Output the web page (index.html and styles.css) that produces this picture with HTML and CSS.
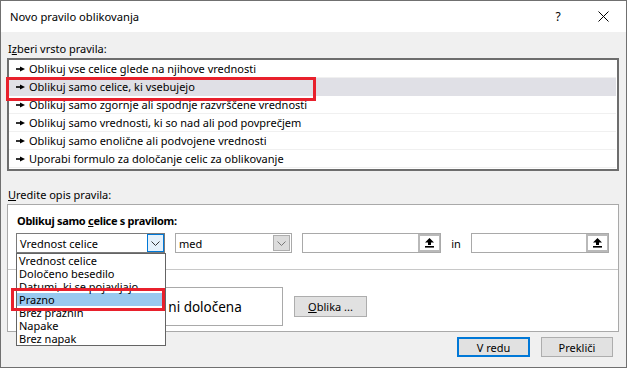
FILE: index.html
```html
<!DOCTYPE html>
<html lang="sl">
<head>
<meta charset="utf-8">
<title>Novo pravilo oblikovanja</title>
<link rel="stylesheet" href="styles.css">
</head>
<body>
<div class="window">
  <div class="titlebar">
    <span class="title">Novo pravilo oblikovanja</span>
    <span class="help">?</span>
    <svg class="close" width="11" height="11" viewBox="0 0 11 11"><path d="M0.5 0.5 L10.5 10.5 M10.5 0.5 L0.5 10.5" stroke="#000" stroke-width="1" fill="none"/></svg>
  </div>
  <div class="content">
    <div class="label">I<u>z</u>beri vrsto pravila:</div>
    <div class="listbox">
      <div class="row"><svg class="arrow" width="9" height="6" viewBox="0 0 9 6"><rect x="0" y="2.2" width="5" height="1.6" fill="#000"/><polygon points="4,0.5 9,3 4,5.5" fill="#000"/></svg>Oblikuj vse celice glede na njihove vrednosti</div>
      <div class="row selected"><svg class="arrow" width="9" height="6" viewBox="0 0 9 6"><rect x="0" y="2.2" width="5" height="1.6" fill="#000"/><polygon points="4,0.5 9,3 4,5.5" fill="#000"/></svg>Oblikuj samo celice, ki vsebujejo</div>
      <div class="row"><svg class="arrow" width="9" height="6" viewBox="0 0 9 6"><rect x="0" y="2.2" width="5" height="1.6" fill="#000"/><polygon points="4,0.5 9,3 4,5.5" fill="#000"/></svg>Oblikuj samo zgornje ali spodnje razvrščene vrednosti</div>
      <div class="row"><svg class="arrow" width="9" height="6" viewBox="0 0 9 6"><rect x="0" y="2.2" width="5" height="1.6" fill="#000"/><polygon points="4,0.5 9,3 4,5.5" fill="#000"/></svg>Oblikuj samo vrednosti, ki so nad ali pod povprečjem</div>
      <div class="row"><svg class="arrow" width="9" height="6" viewBox="0 0 9 6"><rect x="0" y="2.2" width="5" height="1.6" fill="#000"/><polygon points="4,0.5 9,3 4,5.5" fill="#000"/></svg>Oblikuj samo enolične ali podvojene vrednosti</div>
      <div class="row"><svg class="arrow" width="9" height="6" viewBox="0 0 9 6"><rect x="0" y="2.2" width="5" height="1.6" fill="#000"/><polygon points="4,0.5 9,3 4,5.5" fill="#000"/></svg>Uporabi formulo za določanje celic za oblikovanje</div>
    </div>
    <div class="label label2"><u>U</u>redite opis pravila:</div>
    <div class="desc">
      <div class="desc-title">Oblikuj samo <u>c</u>elice s pravilom:</div>
      <div class="controls">
        <div class="combo combo1"><span class="combo-text">Vrednost celice</span><span class="drop drop-active"><svg width="9" height="5" viewBox="0 0 9 5"><path d="M0.5 0.5 L4.5 4.5 L8.5 0.5" stroke="#333" fill="none"/></svg></span></div>
        <div class="combo combo2"><span class="combo-text">med</span><span class="drop"><svg width="9" height="5" viewBox="0 0 9 5"><path d="M0.5 0.5 L4.5 4.5 L8.5 0.5" stroke="#777" fill="none"/></svg></span></div>
        <div class="ref ref1"><span class="ref-field"></span><span class="ref-btn"><svg width="9" height="10" viewBox="0 0 9 10"><polygon points="4.5,0 9,4.5 6,4.5 6,7 3,7 3,4.5 0,4.5" fill="#000"/><rect x="0" y="8" width="9" height="1.6" fill="#000"/></svg></span></div>
        <span class="and">in</span>
        <div class="ref ref2"><span class="ref-field"></span><span class="ref-btn"><svg width="9" height="10" viewBox="0 0 9 10"><polygon points="4.5,0 9,4.5 6,4.5 6,7 3,7 3,4.5 0,4.5" fill="#000"/><rect x="0" y="8" width="9" height="1.6" fill="#000"/></svg></span></div>
      </div>
      <div class="sep"></div>
      <div class="preview-row">
        <span class="preview-spacer"></span>
        <div class="preview">Oblika ni določena</div>
        <button class="btn btn-format"><u>O</u>blika ...</button>
      </div>
    </div>
    <div class="buttons">
      <button class="btn btn-ok">V redu</button>
      <button class="btn btn-cancel">Prekliči</button>
    </div>
  </div>

  <ul class="dropdown">
    <li>Vrednost celice</li>
    <li>Določeno besedilo</li>
    <li>Datumi, ki se pojavljajo</li>
    <li class="hl">Prazno</li>
    <li>Brez praznih</li>
    <li>Napake</li>
    <li>Brez napak</li>
  </ul>
  <div class="mark mark1"></div>
  <div class="mark mark2"></div>
</div>
</body>
</html>
```
FILE: styles.css
```css
* { box-sizing: border-box; }
html, body { margin: 0; padding: 0; }
body {
  font-family: "Noto Sans", "Open Sans", sans-serif;
  font-size: 11px;
  color: #000;
  background: #fff;
}
.window {
  position: relative;
  width: 627px;
  height: 368px;
  border: 1px solid #707070;
  background: #f0f0f0;
  display: flex;
  flex-direction: column;
}
.titlebar {
  height: 31px;
  background: #fff;
  display: flex;
  align-items: center;
  padding-left: 9px;
}
.title { font-size: 11.2px; }
.help { margin-left: auto; width: 12px; text-align: center; font-size: 12px; }
.close { margin-left: 34px; margin-right: 17px; }
.content {
  padding: 9px 7px 0 6px;
  display: flex;
  flex-direction: column;
}
.label { line-height: 15px; height: 15px; padding-left: 1px; margin-bottom: 2px; }
.listbox {
  border: 2px solid #6d6d6d;
  background: #fff;
  padding: 0 1px 1px 0;
}
.row {
  height: 18px;
  border-bottom: 1px solid #f0f0f0;
  display: flex;
  align-items: center;
  padding-left: 7px;
  white-space: nowrap;
}
.row.selected { background: #e0e0e6; border-bottom-color: #e0e0e6; }
.arrow { margin-right: 4px; flex: none; }
.label2 { margin-top: 16px; }
.desc {
  height: 128px;
  border: 1px solid #a9a9a9;
  background: #fff;
  padding: 8px 0 0 8px;
}
.desc-title { font-weight: bold; line-height: 15px; height: 15px; padding-left: 1px; letter-spacing: -0.3px; }
.controls {
  margin-top: 5px;
  height: 20px;
  display: flex;
  align-items: center;
}
.combo {
  flex: none;
  height: 20px;
  border: 1px solid #a9a9a9;
  display: flex;
  align-items: center;
  background: #fff;
}
.combo1 { width: 149px; border-color: #7a7a7a; }
.combo2 { width: 117px; margin-left: 10px; }
.combo-text { flex: 1; padding-left: 3px; white-space: nowrap; }
.drop {
  width: 17px;
  height: 18px;
  display: flex;
  align-items: center;
  justify-content: center;
  background: #dcdcdc;
  border: 1px solid #adadad;
}
.combo2 .drop { margin-right: 1px; height: 16px; }
.drop-active { background: #e5f1fb; border-color: #0078d7; }
.ref {
  flex: none;
  height: 20px;
  border: 1px solid #a9a9a9;
  display: flex;
  background: #fff;
}
.ref1 { width: 139px; margin-left: 10px; }
.ref2 { width: 138px; }
.ref-field { flex: 1; }
.ref-btn {
  width: 22px;
  border: 2px solid #b9b9b9;
  border-right-width: 1px;
  display: flex;
  align-items: center;
  justify-content: center;
  background: #fff;
}
.and { flex: none; width: 30px; text-align: center; }
.sep { margin: 16px 0 0 -8px; height: 1px; background: #c8c8c8; }
.preview-row {
  margin-top: 17px;
  display: flex;
  align-items: center;
}
.preview-spacer { flex: none; width: 67px; }
.preview {
  flex: none;
  width: 200px;
  height: 39px;
  border: 1px solid #a9a9a9;
  display: flex;
  align-items: center;
  justify-content: center;
  font-size: 13.5px;
  white-space: nowrap;
}
.btn {
  font: inherit;
  color: #000;
  background: #e1e1e1;
  border: 1px solid #adadad;
  padding: 0;
  height: 21px;
}
.btn-format { flex: none; width: 73px; margin-left: 11px; }
.buttons {
  margin-top: 5px;
  display: flex;
  justify-content: flex-end;
  gap: 11px;
  margin-right: 6px;
}
.buttons .btn { height: 20px; width: 73px; }
.btn-ok { border: 2px solid #0078d7; }
.btn-cancel { width: 72px !important; }
.dropdown {
  position: absolute;
  left: 15px;
  top: 252px;
  width: 150px;
  margin: 0;
  padding: 0;
  list-style: none;
  background: #fff;
  border: 1px solid #646464;
}
.dropdown li { height: 13px; line-height: 13px; padding-left: 2px; white-space: nowrap; }
.dropdown li.hl { background: #99c9ef; }
.mark { position: absolute; border: 3px solid #e8202c; }
.mark1 { left: 5px; top: 76px; width: 310px; height: 24px; }
.mark2 { left: 10px; top: 287px; width: 154px; height: 23px; }
```
